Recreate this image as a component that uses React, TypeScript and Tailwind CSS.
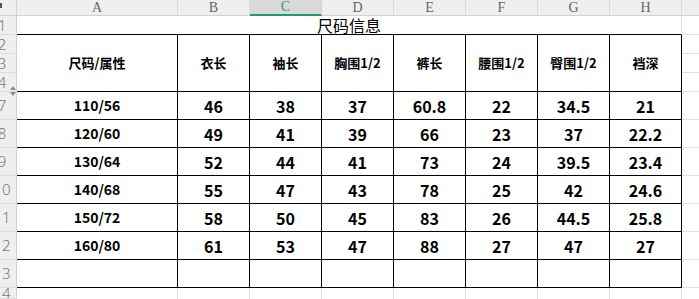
import React from 'react'

const cols = ['A', 'B', 'C', 'D', 'E', 'F', 'G', 'H']
const heads = ['尺码/属性', '衣长', '袖长', '胸围1/2', '裤长', '腰围1/2', '臀围1/2', '裆深']
const rows = [
  ['110/56', '46', '38', '37', '60.8', '22', '34.5', '21'],
  ['120/60', '49', '41', '39', '66', '23', '37', '22.2'],
  ['130/64', '52', '44', '41', '73', '24', '39.5', '23.4'],
  ['140/68', '55', '47', '43', '78', '25', '42', '24.6'],
  ['150/72', '58', '50', '45', '83', '26', '44.5', '25.8'],
  ['160/80', '61', '53', '47', '88', '27', '47', '27'],
  ['', '', '', '', '', '', '', ''],
]

function RowNum({ n }: { n: number }) {
  return (
    <div className="flex justify-end items-center overflow-hidden bg-[#efefef] border-r border-b border-r-[#d2d2d2] border-b-[#dcdcdc]">
      <div className="w-[28px] shrink-0 text-center text-[15px] leading-none font-light text-[#777] font-['Noto_Sans',sans-serif]">
        {n}
      </div>
    </div>
  )
}

function Extra({ bottom = true }: { bottom?: boolean }) {
  return <div className={bottom ? 'border-b border-[#e0e0e0]' : ''} />
}

export default function App() {
  return (
    <div className="relative w-[699px] h-[299px] overflow-hidden bg-white text-black font-['Noto_Sans_CJK_SC','Noto_Sans',sans-serif]">
      <div className="grid h-full grid-cols-[17px_161px_repeat(7,72px)_1fr] grid-rows-[16px_19px_19px_19px_19px_repeat(7,28px)_1fr]">
        {/* column header */}
        <div className="relative bg-[#efefef] border-r border-b border-r-[#d2d2d2] border-b-[#d2d2d2]">
          <div className="absolute left-0 top-[3px] w-[2px] h-[5px] bg-[#555]" />
        </div>
        {cols.map(c =>
          c === 'C' ? (
            <div key={c} className="flex items-center justify-center bg-[#d9d9d9] border-r border-r-[#d2d2d2] border-b-2 border-b-[#1e9c6b] text-[14px] leading-none text-[#1e9c6b] font-['Liberation_Serif',serif]">
              {c}
            </div>
          ) : (
            <div key={c} className="flex items-center justify-center bg-[#efefef] border-r border-b border-r-[#d9d9d9] border-b-[#d2d2d2] text-[14px] leading-none text-[#666] font-['Liberation_Serif',serif]">
              {c}
            </div>
          )
        )}
        <div className="bg-[#efefef] border-b border-[#d2d2d2]" />

        {/* row 1: title */}
        <RowNum n={1} />
        <div className="col-span-8 flex items-end justify-center border-b border-r border-b-black border-r-[#e0e0e0] text-[16px] leading-[18px]">
          尺码信息
        </div>
        <Extra />

        {/* rows 2-4: header */}
        <RowNum n={2} />
        {heads.map(h => (
          <div key={h} className="row-span-3 flex items-center justify-center border-r border-b border-black text-[13px] font-bold">
            {h}
          </div>
        ))}
        <Extra />
        <RowNum n={3} />
        <Extra />
        <RowNum n={4} />
        <Extra />

        {/* data rows 7-13 */}
        {rows.map((r, i) => (
          <React.Fragment key={i}>
            <RowNum n={7 + i} />
            {r.map((v, j) => (
              <div
                key={j}
                className={`flex items-center justify-center border-r border-b border-black font-bold ${j === 0 ? 'text-[14px]' : 'text-[16px]'}`}
              >
                {v}
              </div>
            ))}
            <Extra />
          </React.Fragment>
        ))}

        {/* row 14 */}
        <RowNum n={14} />
        {cols.map(c => (
          <div key={c} className="border-r border-[#e0e0e0]" />
        ))}
        <Extra bottom={false} />
      </div>

      {/* hidden rows marker */}
      <div className="absolute left-[10px] top-[86px] w-0 h-0 border-l-[3px] border-r-[3px] border-b-[4px] border-l-transparent border-r-transparent border-b-[#8a8a8a]" />
      <div className="absolute left-[10px] top-[92px] w-0 h-0 border-l-[3px] border-r-[3px] border-t-[4px] border-l-transparent border-r-transparent border-t-[#8a8a8a]" />
    </div>
  )
}
